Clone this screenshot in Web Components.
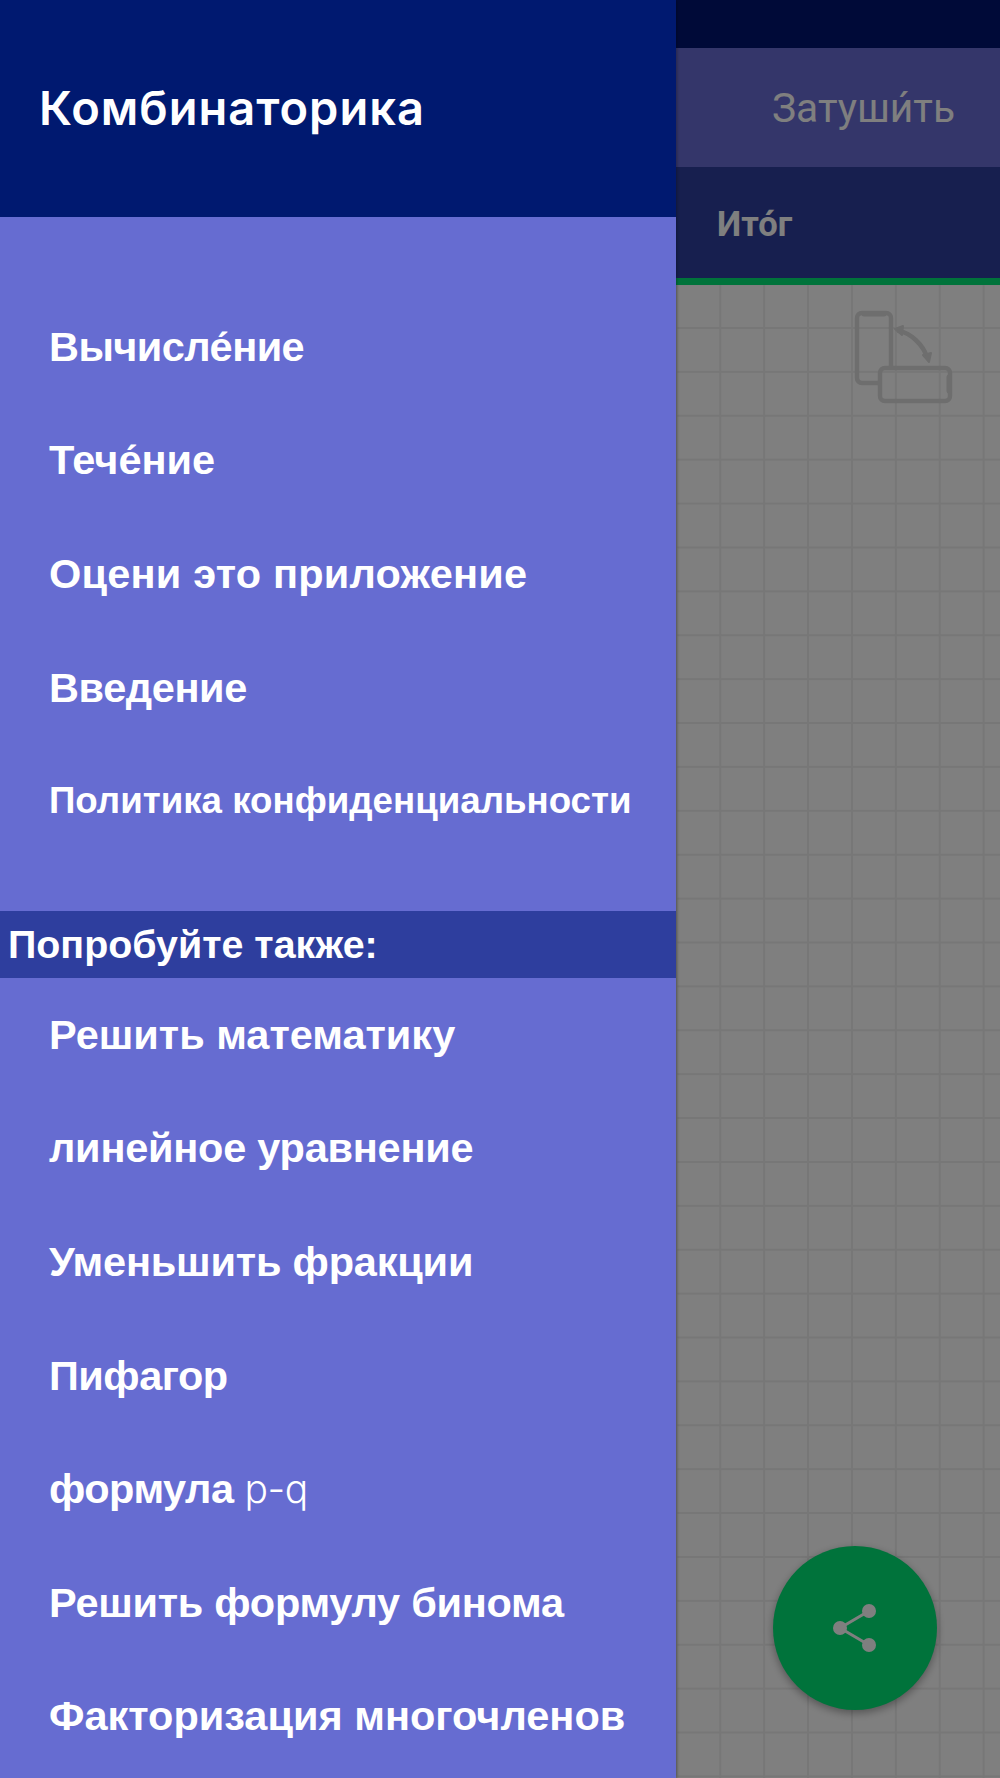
<!DOCTYPE html>
<html lang="ru">
<head>
<meta charset="utf-8">
<title>Комбинаторика</title>
<style>
html, body { margin: 0; height: 100%; }
body { font-family: "Liberation Sans", sans-serif; overflow: hidden; }
</style>
</head>
<body>
<app-shell>
    <calc-page slot="page"></calc-page>
    <side-drawer slot="drawer" title="Комбинаторика">
        <drawer-item style="letter-spacing:-.55px">Вычисле́ние</drawer-item>
        <drawer-item>Тече́ние</drawer-item>
        <drawer-item style="letter-spacing:.2px">Оцени это приложение</drawer-item>
        <drawer-item style="letter-spacing:-.4px">Введение</drawer-item>
        <drawer-item small>Политика конфиденциальности</drawer-item>
        <drawer-section>Попробуйте также:</drawer-section>
        <drawer-item>Решить математику</drawer-item>
        <drawer-item style="letter-spacing:-.25px">линейное уравнение</drawer-item>
        <drawer-item style="letter-spacing:-.2px">Уменьшить фракции</drawer-item>
        <drawer-item style="letter-spacing:-.5px">Пифагор</drawer-item>
        <drawer-item style="letter-spacing:-.5px">формула <span style="font-family:Inter,sans-serif;font-weight:300;font-size:39px">p-q</span></drawer-item>
        <drawer-item style="letter-spacing:-.27px">Решить формулу бинома</drawer-item>
        <drawer-item>Факторизация многочленов</drawer-item>
    </side-drawer>
</app-shell>

<script>
class AppShell extends HTMLElement {
    constructor() {
        super()
        this.attachShadow({ mode: 'open' })
        this.shadowRoot.innerHTML = `
        <style>
        :host { display: block; position: relative; width: 1000px; height: 1778px; overflow: hidden; }
        .scrim { position: absolute; inset: 0; background: rgba(0,0,0,0.5); }
        .drawer { position: absolute; left: 0; top: 0; bottom: 0; width: 676px; }
        </style>
        <slot name="page"></slot>
        <div class="scrim"></div>
        <div class="drawer"><slot name="drawer"></slot></div>
        `
    }
}
customElements.define('app-shell', AppShell)

class CalcPage extends HTMLElement {
    constructor() {
        super()
        this.attachShadow({ mode: 'open' })
        this.shadowRoot.innerHTML = `
        <style>
        :host { display: flex; flex-direction: column; height: 1778px; background: #fff; font-family: Roboto, sans-serif; color: #fff; }
        .status { height: 48px; background: #001470; }
        .toolbar { height: 119px; background: #686cd4; display: flex; align-items: center; justify-content: flex-end; padding-right: 45px; font-size: 40.7px; }
        .tabs { height: 109px; padding-top: 2px; background: #2e3e9e; border-bottom: 7px solid #00e676; display: flex; align-items: center; padding-left: 717px; font-size: 34.5px; font-weight: 700; }
        .canvas {
            flex: 1; position: relative;
            background-color: #fff;
            background-image:
                linear-gradient(to right, #eeeeee 2px, transparent 2px),
                linear-gradient(to bottom, #eeeeee 2px, transparent 2px);
            background-size: 43.9px 43.9px;
            background-position: 17px 42px;
        }
        .rotate { position: absolute; left: 853px; top: 24px; }
        .fab {
            position: absolute; left: 773px; top: 1261px; width: 164px; height: 164px;
            border-radius: 50%; background: #00e676;
            box-shadow: 0 3px 8px rgba(0,0,0,0.35);
            display: flex; align-items: center; justify-content: center;
        }
        </style>
        <div class="status"></div>
        <div class="toolbar">Затуши́ть</div>
        <div class="tabs">Ито́г</div>
        <div class="canvas">
            <svg class="rotate" width="102" height="96" viewBox="0 0 102 96" fill="none" stroke="#dcdcdc" stroke-width="4.5" stroke-linejoin="round" stroke-linecap="round">
                <path d="M25 74H9a5 5 0 0 1-5-5V9a5 5 0 0 1 5-5h24a5 5 0 0 1 5 5v48"/>
                <path d="M11 5h20" stroke-width="5"/>
                <rect x="27" y="59" width="70" height="33" rx="5"/>
                <path d="M96 68v14" stroke-width="5"/>
                <path d="M46 22C58 24 70 36 74 48"/>
                <path d="M42 20l8-3-1 9zM76 53l-6-7 8-2z" fill="#dcdcdc" stroke-width="2"/>
            </svg>
            <div class="fab">
                <svg width="48" height="52" viewBox="0 0 48 52" fill="#fff" stroke="#fff" stroke-width="3">
                    <path d="M9 26L38 9M9 26L38 43" fill="none"/>
                    <circle cx="9" cy="26" r="7" stroke="none"/>
                    <circle cx="38" cy="9" r="7" stroke="none"/>
                    <circle cx="38" cy="43" r="7" stroke="none"/>
                </svg>
            </div>
        </div>
        `
    }
}
customElements.define('calc-page', CalcPage)

class SideDrawer extends HTMLElement {
    constructor() {
        super()
        this.attachShadow({ mode: 'open' })
    }
    connectedCallback() {
        this.render()
    }
    render() {
        this.shadowRoot.innerHTML = `
        <style>
        :host { display: flex; flex-direction: column; height: 100%; background: #666cd1; box-shadow: 1px 0 3px rgba(0,0,0,0.3); }
        header { height: 217px; flex: none; background: #001970; display: flex; align-items: center; padding: 0 0 3px 39px; box-sizing: border-box; color: #fff; font: 600 47px Inter, sans-serif; letter-spacing: 1px; }
        .list { padding-top: 73px; display: flex; flex-direction: column; }
        </style>
        <header>${this.getAttribute('title')}</header>
        <div class="list"><slot></slot></div>
        `
    }
}
customElements.define('side-drawer', SideDrawer)

class DrawerItem extends HTMLElement {
    constructor() {
        super()
        this.attachShadow({ mode: 'open' })
        this.shadowRoot.innerHTML = `
        <style>
        :host { display: flex; align-items: center; height: 113.6px; padding-left: 49px; color: #fff; font: 700 41.5px "Liberation Sans", sans-serif; white-space: nowrap; }
        :host([small]) { font-size: 36.7px; }
        </style>
        <div><slot></slot></div>
        `
    }
}
customElements.define('drawer-item', DrawerItem)

class DrawerSection extends HTMLElement {
    constructor() {
        super()
        this.attachShadow({ mode: 'open' })
        this.shadowRoot.innerHTML = `
        <style>
        :host { display: flex; align-items: center; height: 66px; padding-top: 1px; margin: 53px 0 0; padding-left: 8px; background: #2e3e9e; color: #fff; font: 700 39.4px "Liberation Sans", sans-serif; }
        </style>
        <div><slot></slot></div>
        `
    }
}
customElements.define('drawer-section', DrawerSection)
</script>
</body>
</html>
